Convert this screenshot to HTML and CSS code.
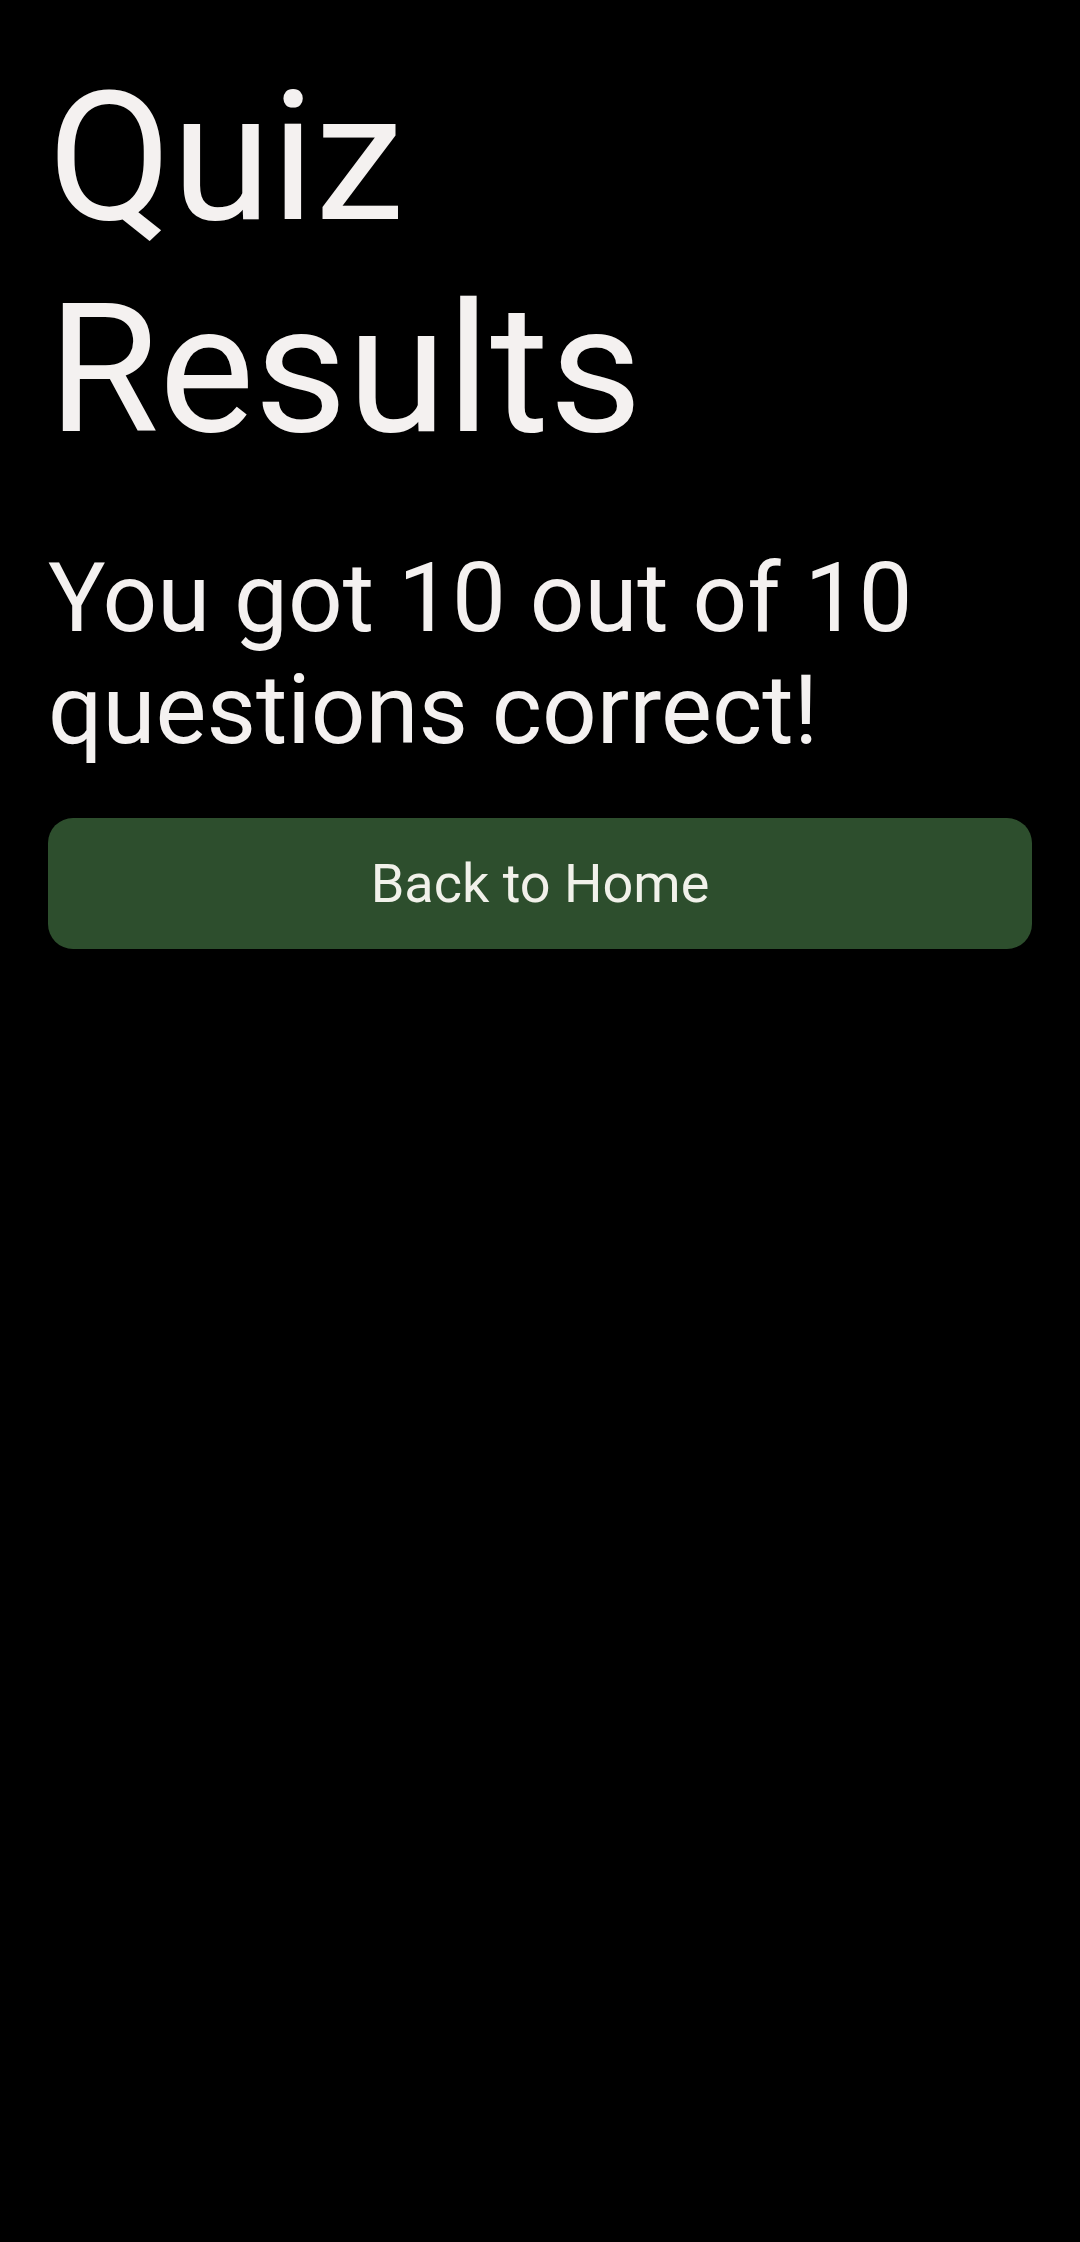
FILE: index.html
```html
<!DOCTYPE html>
<html lang="en">
<head>
<meta charset="utf-8">
<title>Quiz Results</title>
<link rel="stylesheet" href="styles.css">
</head>
<body>
<main class="screen">
  <h1 class="title">Quiz<br>Results</h1>
  <p class="score">You got 10 out of 10 questions correct!</p>
  <button class="home-btn" type="button">Back to Home</button>
</main>
</body>
</html>
```

FILE: styles.css
```css
html, body {
  margin: 0;
  padding: 0;
  background: #000;
}

body {
  width: 1080px;
  height: 2242px;
  font-family: Roboto, "Noto Sans", sans-serif;
  color: #f4f1f0;
}

.screen {
  display: flex;
  flex-direction: column;
  padding: 52px 48px 0;
}

.title {
  margin: 0;
  font-size: 180px;
  font-weight: 400;
  line-height: 212px;
}

.score {
  margin: 66px 0 0;
  font-size: 96px;
  font-weight: 400;
  line-height: 112px;
}

.home-btn {
  margin-top: 52px;
  height: 131px;
  width: 100%;
  border: none;
  border-radius: 25px;
  background: #2d4e2d;
  color: #f1f1ea;
  font-family: Roboto, "Noto Sans", sans-serif;
  font-size: 54px;
  font-weight: 400;
  padding: 0;
}
```
